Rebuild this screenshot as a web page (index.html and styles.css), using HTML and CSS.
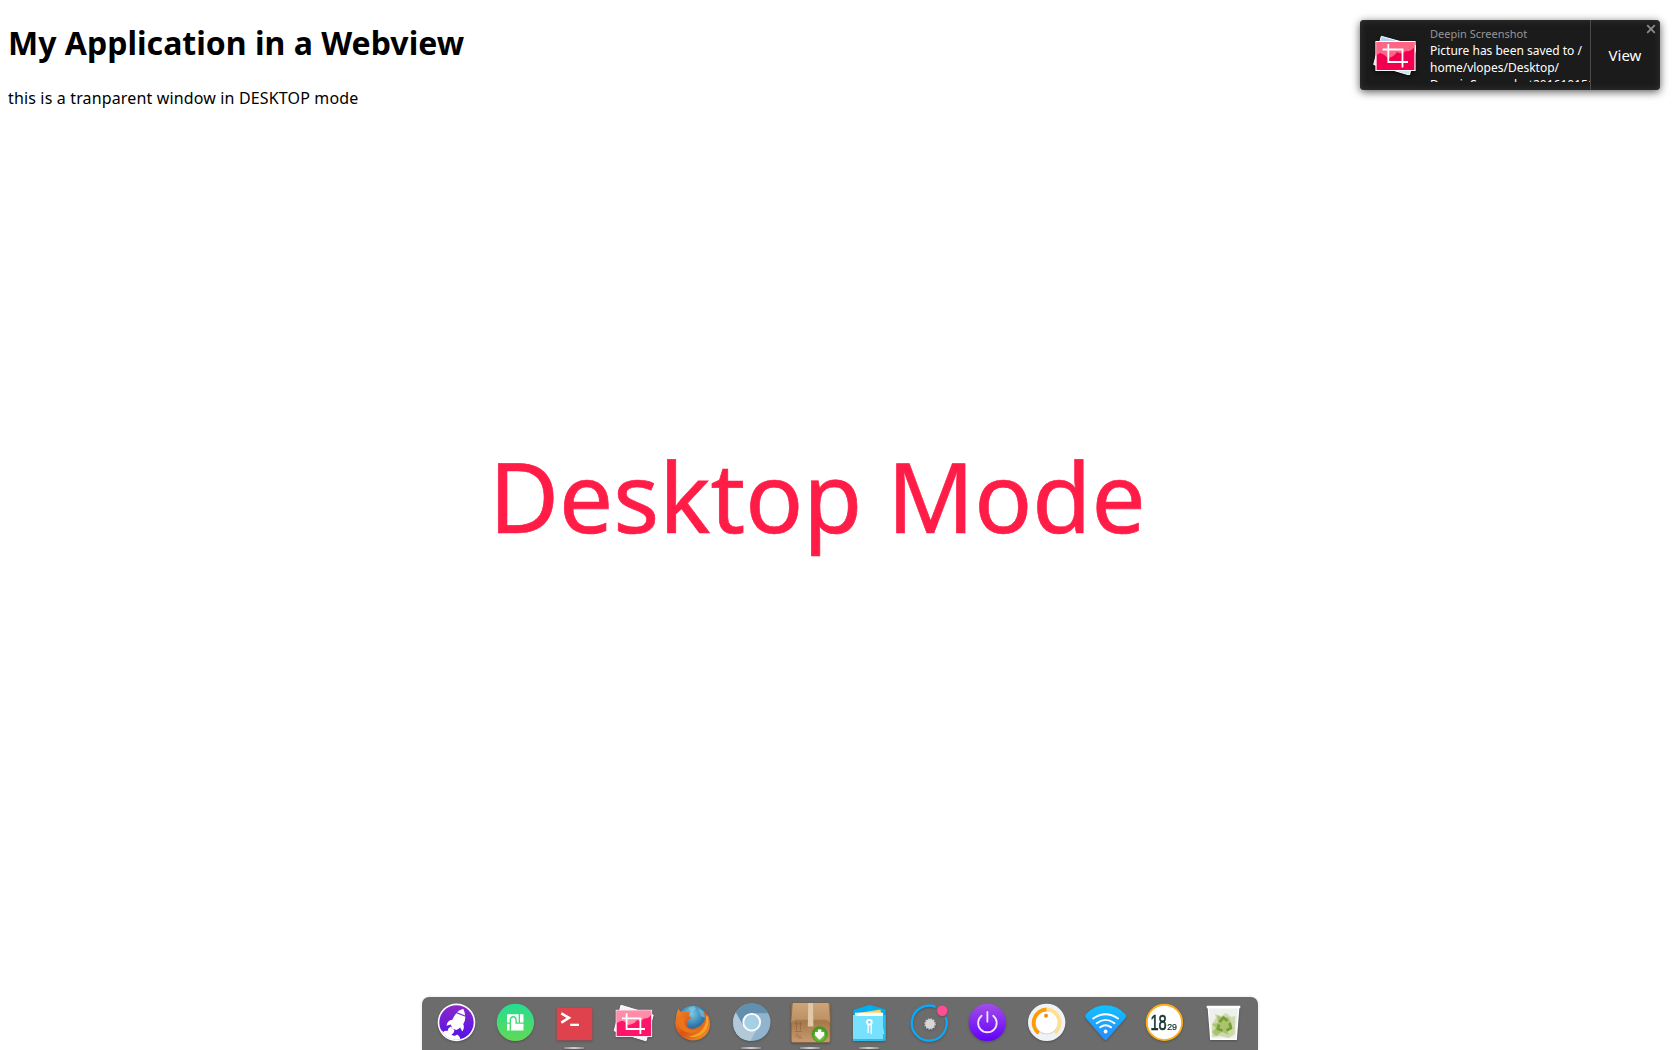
FILE: index.html
```html
<!DOCTYPE html>
<html lang="en">
<head>
<meta charset="utf-8">
<title>My Application in a Webview</title>
<link rel="stylesheet" href="styles.css">
</head>
<body>
<main class="desktop">
  <h1 class="title">My Application in a Webview</h1>
  <p class="intro">this is a tranparent window in DESKTOP mode</p>
  <div class="banner">Desktop Mode</div>
</main>

<aside class="notice">
  <svg class="notice-icon" viewBox="8 5 44 42">
    <defs>
      <linearGradient id="paper" x2="1" y2="1"><stop stop-color="#9fd4f8"/><stop offset="1" stop-color="#c4e6ff"/></linearGradient>
    </defs>
    <path d="M17.3 8.3 52.5 18 45.5 47 9.7 36.5Z" fill="url(#paper)" stroke="#fff" stroke-width="1"/>
    <path d="M12 13.5H51V42.5H12Z" fill="#f2004f" stroke="#fff" stroke-width="1.2"/>
    <path d="M12.6 14.1H50.4V19Q47 24 42 23Q37 27 33 24Q30 29 24 30Q20 26 16 25L12.6 27Z" fill="#ff6685"/>
    <path d="M24.3 16V34H44M18.5 21.5H38.5V39.5" fill="none" stroke="#fff" stroke-width="1.8"/>
  </svg>
  <div class="notice-text">
    <div class="notice-app">Deepin Screenshot</div>
    <div class="notice-body">Picture has been saved to /<br>home/vlopes/Desktop/<br>DeepinScreenshot20161015182</div>
  </div>
  <div class="notice-action">View</div>
  <svg class="notice-close" viewBox="0 0 10 10"><path d="M1.2 1.2 8.8 8.8M8.8 1.2 1.2 8.8" stroke="#8b8b8b" stroke-width="1.9"/></svg>
</aside>

<nav class="dock">
  <svg class="slot" viewBox="0 0 59 53">
    <defs><linearGradient id="violet" x2="0" y2="1"><stop stop-color="#8b28c8"/><stop offset="1" stop-color="#5212ec"/></linearGradient>
    <clipPath id="disc"><circle cx="29.5" cy="25.4" r="17.3"/></clipPath></defs>
    <circle cx="29.5" cy="25.4" r="18.8" fill="#fff"/>
    <circle cx="29.5" cy="25.4" r="17.2" fill="url(#violet)"/>
    <g clip-path="url(#disc)" fill="#fff">
      <path d="M36.2 11.8Q37.8 15 38.2 18.5L30 15.3Q32.6 12.8 36.2 11.8Z"/>
      <path d="M29.3 16.2 38.4 19.8Q38.3 24 36.2 27.3Q38 30.3 35.3 34.6L33.2 30.4Q31.5 32 29.2 33L25.3 31.4 23.8 27.4 19.5 28.8Q20.3 23.2 25.3 22.8Q26.8 19 29.3 16.2Z"/>
      <path d="M23.7 29.5 27.2 33Q27.7 36 24.5 37.5Q27.5 40 30 37.5Q34 39.5 33.5 45H10V32Q15 33 16.5 35Q18 33 20.5 34Q21 30.5 23.7 29.5Z"/>
    </g>
  </svg>
  <svg class="slot" viewBox="0 0 59 53">
    <defs><linearGradient id="green" x2="0" y2="1"><stop stop-color="#25dd93"/><stop offset="1" stop-color="#62d955"/></linearGradient></defs>
    <circle cx="29.4" cy="25.4" r="18.7" fill="url(#green)"/>
    <path d="M21 17.2H32.7V25.5H30.8V22.5Q30.4 19 27.2 19 24 19 23.6 22.5V25.5H21ZM34 17.2H37.5V25.5H34ZM21 26.8H23.6V33.6H21ZM25 33.6V22.5Q25.3 20.4 27.2 20.4 29.1 20.4 29.4 22.5V26.8H37.5V33.6Z" fill="#fff"/>
  </svg>
  <svg class="slot running" viewBox="0 0 59 53">
    <rect x="11.7" y="11" width="35.6" height="32.3" fill="#df424d"/>
    <path d="M16.3 16.4 24 20.8 16.3 25.6" fill="none" stroke="#fff" stroke-width="2.5"/>
    <path d="M25.2 26.7H34V29H25.2Z" fill="#fff"/>
  </svg>
  <svg class="slot" viewBox="0 0 59 53">
    <path d="M17 8.3 49.2 18 42 43.8 10.2 33.8Z" fill="#edf7fc" stroke="#fff"/>
    <rect x="12.2" y="13.3" width="35.4" height="26.2" fill="#ff146b" stroke="#ffe5ef"/>
    <path d="M12.7 13.8H47.1V18Q44 22 40 21.5Q37 25 33 23Q31 27 24 28Q20 23 17 24L12.7 26Z" fill="#ff8da7"/>
    <path d="M22.6 16.3V32H41M18 21.3H36.4V37" fill="none" stroke="#fff" stroke-width="1.8"/>
  </svg>
  <svg class="slot" viewBox="0 0 59 53">
    <defs>
      <radialGradient id="globe" cx=".45" cy=".25" r=".75"><stop stop-color="#7ccbe6"/><stop offset=".5" stop-color="#347db0"/><stop offset="1" stop-color="#153465"/></radialGradient>
      <linearGradient id="fur" x2="1" y2="1"><stop stop-color="#f08b2d"/><stop offset=".5" stop-color="#d95316"/><stop offset="1" stop-color="#f6a11c"/></linearGradient>
    </defs>
    <circle cx="30" cy="24.5" r="15.8" fill="url(#globe)"/>
    <path d="M25 11 31 9 33 12 29 15ZM35 11 42 15 44 22 38 19Z" fill="#8bd2e5" opacity=".55"/>
    <path d="M13.5 17 15.2 11.8 17.6 14.8Q21 13.5 24.5 15.1L26.8 14.5 26 18.5 28.2 21.3 24.8 23.8Q22.8 26.3 24.6 29.6 28 33.5 33.7 30.5 39 29 41.8 22.5 42.3 17.3 40.3 13.3 47.2 18 47.3 27.2 46.5 37.5 37.4 42 28 45.5 19.8 40.2 12.2 34.8 12.3 26Z" fill="url(#fur)"/>
    <path d="M45.3 20Q47 29.5 40.3 36 34 41.5 26 39.5 35.5 38.3 39.7 32 44 27 43 18Z" fill="#f4a42d"/>
    <path d="M14 25Q17 35 27 36 33 36 36 32 28 35 23 30 19 25 23 21 17 19 14 25Z" fill="#eb751b"/>
  </svg>
  <svg class="slot running" viewBox="0 0 59 53">
    <circle cx="29.7" cy="25.2" r="18.8" fill="#91b4ce"/>
    <path d="M13.8 15.5Q19 6.4 29.7 6.4 40.8 6.4 46.2 16.2H29.7Q23 16.2 21 22.5L22 30Z" fill="#628fae"/>
    <path d="M13.8 15.5 22 30Q25 35 34 33.8L28.4 44Q16 43 12 32 9.5 22.5 13.8 15.5Z" fill="#b1c9d9"/>
    <circle cx="29.7" cy="25.2" r="8.4" fill="#a5cfe5" stroke="#fff" stroke-width="1.8"/>
  </svg>
  <svg class="slot running" viewBox="0 0 59 53">
    <defs>
      <linearGradient id="lid" x2="0" y2="1"><stop stop-color="#cda579"/><stop offset="1" stop-color="#ba8e60"/></linearGradient>
      <linearGradient id="box" x2="0" y2="1"><stop stop-color="#a8794b"/><stop offset=".5" stop-color="#a8794b"/><stop offset="1" stop-color="#c89c70"/></linearGradient>
      <radialGradient id="leaf" cx=".5" cy=".6"><stop stop-color="#a4e055"/><stop offset="1" stop-color="#3d9a1c"/></radialGradient>
    </defs>
    <rect x="10.2" y="6" width="39" height="39.5" rx="2" fill="url(#box)" stroke="#80603f" stroke-width=".7"/>
    <path d="M12 6H47.5L49.2 25.5Q47 23 44 22.8H16Q12 23 10.2 26Z" fill="url(#lid)"/>
    <path d="M27.2 6H32L32.4 29.5H26.8Z" fill="#dfc9aa"/>
    <path d="M15.5 26V33M19.5 26V33M14.3 27.5 15.5 25 16.7 27.5M18.3 27.5 19.5 25 20.7 27.5M14 34.5H21M14.5 39H20M15 37H17M17 41H21" fill="none" stroke="#896039" stroke-width="1" opacity=".6"/>
    <circle cx="38.7" cy="37.3" r="7.9" fill="url(#leaf)" stroke="#56912e" stroke-width=".5"/>
    <path d="M37 32.5H40.3V35H43.2V38.2L38.6 42.8 34 38.2V35H37Z" fill="#fff"/>
  </svg>
  <svg class="slot running" viewBox="0 0 59 53">
    <path d="M13.3 18V13L28.6 8Q29.5 7.7 30.4 8L45.7 12.5V40H13.3Z" fill="#00adf2"/>
    <path d="M15 16.5 40.5 12.5 44.5 36H17Z" fill="#ffd054"/>
    <rect x="15" y="15.7" width="28" height="8" fill="#fff"/>
    <path d="M13 18H15.5Q15.5 19 17 19H43V43.7H13Z" fill="#77e2ff"/>
    <path d="M43 18H45.7V43.7H13V42H43Z" fill="#24bdec"/>
    <path d="M43 30 44.4 37H43Z" fill="#e8ce58"/>
    <path d="M28.2 27V36M31.2 27V37" stroke="#fff" stroke-width="1.3"/>
    <circle cx="29.4" cy="25.3" r="2.3" fill="#68cceb" stroke="#fff" stroke-width="2"/>
  </svg>
  <svg class="slot" viewBox="0 0 59 53">
    <path d="M36.5 9.8A17.5 17.5 0 1 0 46.8 20.5" fill="none" stroke="#0ba9f7" stroke-width="2.4"/>
    <circle cx="43.2" cy="13.7" r="5.2" fill="#ff4c94"/>
    <circle cx="31" cy="27" r="4.9" fill="#d7d7d7"/>
    <circle cx="31" cy="27" r="5.1" fill="none" stroke="#cacaca" stroke-width="1.5" stroke-dasharray="1.35 1.32"/>
  </svg>
  <svg class="slot" viewBox="0 0 59 53">
    <defs><linearGradient id="power" x2="0" y2="1"><stop stop-color="#a34ee8"/><stop offset="1" stop-color="#6200fa"/></linearGradient></defs>
    <circle cx="29.4" cy="25.4" r="18.7" fill="url(#power)"/>
    <path d="M23.6 18.7A9.3 9.3 0 1 0 35.2 18.7M29.4 15V24.7" fill="none" stroke="#f3e7ff" stroke-width="1.8" stroke-linecap="round"/>
  </svg>
  <svg class="slot" viewBox="0 0 59 53">
    <circle cx="29.7" cy="25.4" r="18.7" fill="#eff3f7"/>
    <path d="M21.7 36.2A13.4 13.4 0 0 1 29.7 12.4" fill="none" stroke="#ff9b04" stroke-width="4"/>
    <path d="M29.7 12.4A13.4 13.4 0 0 1 37.7 36.2" fill="none" stroke="#ffe092" stroke-width="4"/>
    <circle cx="29.7" cy="26.5" r="11" fill="#c3bfb8" opacity=".6"/>
    <circle cx="29.7" cy="25.6" r="10.8" fill="#fff"/>
    <circle cx="29" cy="18.8" r="2" fill="#f68a18"/>
  </svg>
  <svg class="slot" viewBox="0 0 59 53">
    <defs><linearGradient id="sky" x2="0" y2="1"><stop stop-color="#12c1ff"/><stop offset="1" stop-color="#278cff"/></linearGradient></defs>
    <path d="M9.8 17.2Q18 8.2 29.6 8.2T49.4 17.2Q50.8 19.4 49 21.5L31.4 42Q29.6 44.3 27.8 42L10.2 21.5Q8.4 19.4 9.8 17.2Z" fill="url(#sky)"/>
    <path d="M17.2 21.5Q29.6 13 42 21.5M20.7 26.2Q29.6 19.5 38.5 26.2M24.2 30.3Q29.6 26 35 30.3" fill="none" stroke="#fff" stroke-width="1.9" stroke-linecap="round"/>
    <circle cx="29.6" cy="34.5" r="1.9" fill="#fff"/>
  </svg>
  <svg class="slot" viewBox="0 0 59 53">
    <circle cx="29.4" cy="25.4" r="17.7" fill="#fff" stroke="#ffac18" stroke-width="1.9"/>
    <text class="clock" transform="translate(15.4 33.3) scale(.65 1)" font-size="22.5" stroke-width=".7">18</text>
    <text class="clock" transform="translate(32.2 32.8) scale(.9 1)" font-size="9.8" stroke-width=".25">29</text>
  </svg>
  <svg class="slot" viewBox="0 0 59 53">
    <path d="M14.3 10.5H44.7L42.2 42.3H16.8Z" fill="#eef0ec" stroke="#fff" stroke-width="1.4"/>
    <path d="M18 27 22 21 21 17 27 19 32 16 37 20 41.3 19 40.8 37 35 41 26 39 18.3 40Z" fill="#ced9ac"/>
    <path d="M23 18 29 21 34 20 37 25 38 31 33 34 35 38 28 35 22 39 18 35 22 31 18 27 24 26Z" fill="#a3bd60" opacity=".8"/>
    <path d="M25.4 25 29.5 20.5 33.5 24M35.5 26 37 31 32.5 33.5M28.5 33.5 23.8 32 25 27.5" fill="none" stroke="#759f35" stroke-width="2.8" stroke-linejoin="round"/>
    <path d="M12.7 8.8H46.3V11.3H12.7Z" fill="#fff"/>
  </svg>
</nav>
</body>
</html>
```
FILE: styles.css
```css
html, body {
  height: 100%;
}

body {
  margin: 0;
  overflow: hidden;
  background: #fff;
  color: #000;
  font-family: "Noto Sans", sans-serif;
  position: relative;
}

.desktop {
  padding: 0 8px;
}

.title {
  margin: 0;
  padding-top: 21px;
  font-size: 32px;
  line-height: 44px;
  font-weight: 700;
  letter-spacing: .02px;
}

.intro {
  margin: 22px 0 0;
  font-size: 16px;
  line-height: 22px;
  letter-spacing: .15px;
}

.banner {
  margin: 321px 0 0 481px;
  font-size: 96px;
  line-height: 132px;
  color: #ff1d48;
  -webkit-text-stroke: .7px #ff1d48;
  white-space: nowrap;
}

/* Notification bubble over the desktop */
.notice {
  position: absolute;
  top: 20px;
  right: 20px;
  width: 300px;
  height: 70px;
  display: flex;
  box-sizing: border-box;
  border-radius: 4px;
  background: #1b1b1b;
  box-shadow: 0 2px 9px rgba(0, 0, 0, .65), inset 0 0 7px #363636;
  color: #fff;
}

.notice-icon {
  width: 44px;
  height: 42px;
  margin: 13px 14px 0 12px;
  flex: none;
  filter: drop-shadow(0 2px 2px rgba(0, 0, 0, .5));
}

.notice-text {
  width: 160px;
  height: 56px;
  margin-top: 6px;
  overflow: hidden;
  flex: none;
}

.notice-app {
  font-size: 11px;
  line-height: 16px;
  color: #969696;
}

.notice-body {
  font-size: 12px;
  line-height: 17px;
  white-space: nowrap;
}

.notice-action {
  flex: 1;
  border-left: 1px solid #494949;
  font-size: 15px;
  line-height: 71px;
  padding-right: 1px;
  text-align: center;
}

.notice-close {
  position: absolute;
  top: 4px;
  right: 4px;
  width: 10px;
  height: 10px;
}

/* Bottom dock */
.dock {
  position: absolute;
  left: 422px;
  bottom: 0;
  height: 53px;
  padding: 0 5px;
  display: flex;
  border-radius: 7px 7px 0 0;
  background: #6c6c6c;
  box-shadow: 0 0 3px rgba(0, 0, 0, .12);
}

.slot {
  width: 59px;
  height: 53px;
  filter: drop-shadow(0 1px 1px rgba(0, 0, 0, .25));
}

.running {
  background: linear-gradient(90deg, #8b8b8b, #d2d0d4, #8b8b8b) 19px 50px / 20px 2px no-repeat;
}

.clock {
  font-family: "Liberation Sans", sans-serif;
  fill: #12352f;
  stroke: #12352f;
}
```
